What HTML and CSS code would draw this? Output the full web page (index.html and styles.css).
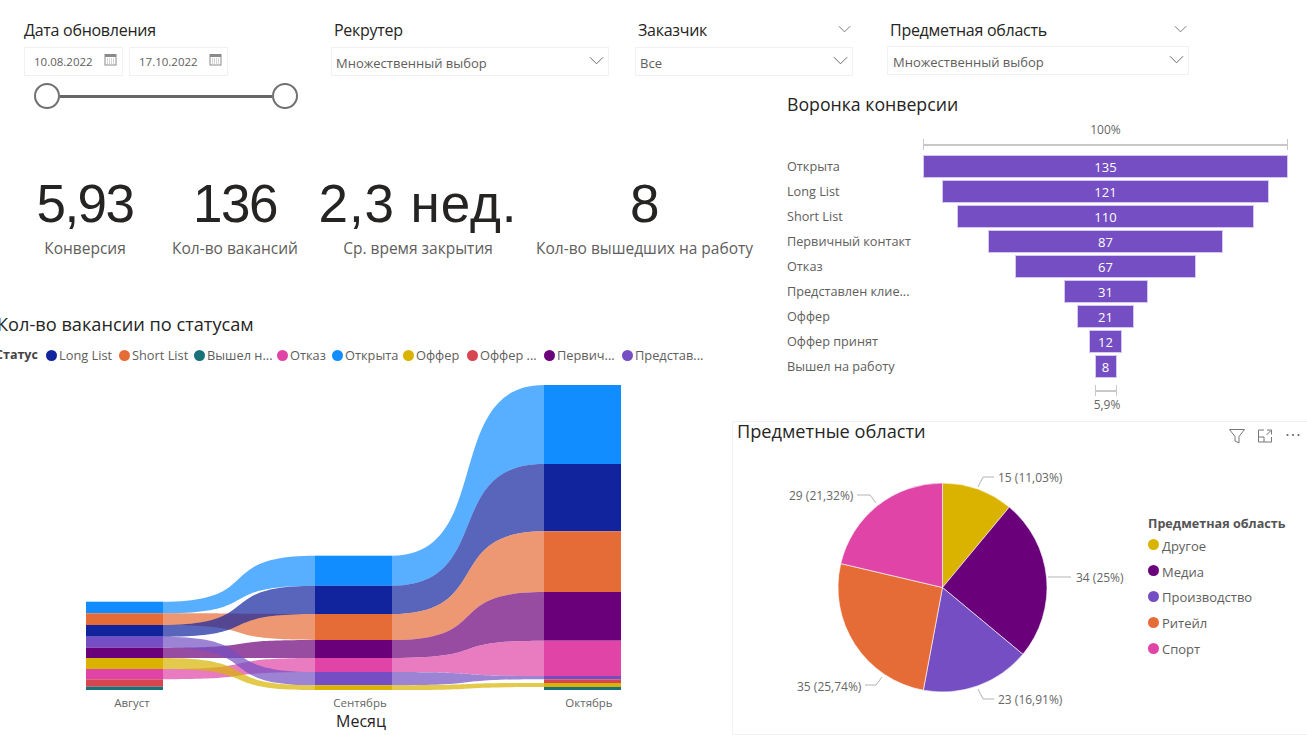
FILE: index.html
```html
<!DOCTYPE html>
<html lang="ru">
<head>
<meta charset="utf-8">
<title>Дашборд вакансий</title>
<link rel="stylesheet" href="styles.css">
</head>
<body>
<div class="page">
  <header class="slicers">
    <section class="slicer s-date">
      <div class="slicer-title"><span>Дата обновления</span></div>
      <div class="dates">
        <div class="date">10.08.2022
          <svg class="cal" viewBox="0 0 13 13"><rect x="1" y="1.5" width="11" height="10.5" fill="none" stroke="#8a8a8a"/><rect x="1" y="1.5" width="11" height="2.5" fill="#8a8a8a"/><path d="M3 6h7M3 8h7M3 10h7" stroke="#a8a8a8" stroke-dasharray="1 1"/></svg>
        </div>
        <div class="date">17.10.2022
          <svg class="cal" viewBox="0 0 13 13"><rect x="1" y="1.5" width="11" height="10.5" fill="none" stroke="#8a8a8a"/><rect x="1" y="1.5" width="11" height="2.5" fill="#8a8a8a"/><path d="M3 6h7M3 8h7M3 10h7" stroke="#a8a8a8" stroke-dasharray="1 1"/></svg>
        </div>
      </div>
      <div class="range"><span class="knob"></span><span class="track"></span><span class="knob"></span></div>
    </section>
    <section class="slicer s-rec">
      <div class="slicer-title"><span>Рекрутер</span></div>
      <div class="drop"><span>Множественный выбор</span><svg class="chev" viewBox="0 0 16 9"><path d="M1 1l7 7 7-7" fill="none" stroke="#605e5c"/></svg></div>
    </section>
    <section class="slicer s-cust">
      <div class="slicer-title"><span>Заказчик</span><svg class="chev" viewBox="0 0 16 9"><path d="M1 1l7 7 7-7" fill="none" stroke="#605e5c"/></svg></div>
      <div class="drop"><span>Все</span><svg class="chev" viewBox="0 0 16 9"><path d="M1 1l7 7 7-7" fill="none" stroke="#605e5c"/></svg></div>
    </section>
    <section class="slicer s-area">
      <div class="slicer-title"><span>Предметная область</span><svg class="chev" viewBox="0 0 16 9"><path d="M1 1l7 7 7-7" fill="none" stroke="#605e5c"/></svg></div>
      <div class="drop"><span>Множественный выбор</span><svg class="chev" viewBox="0 0 16 9"><path d="M1 1l7 7 7-7" fill="none" stroke="#605e5c"/></svg></div>
    </section>
  </header>

  <main class="board">
    <div class="left">
      <div class="kpis">
        <div class="kpi k1"><div class="kpi-num">5,93</div><div class="kpi-label">Конверсия</div></div>
        <div class="kpi k2"><div class="kpi-num">136</div><div class="kpi-label">Кол-во вакансий</div></div>
        <div class="kpi k3"><div class="kpi-num wide">2,3 нед.</div><div class="kpi-label">Ср. время закрытия</div></div>
        <div class="kpi k4"><div class="kpi-num">8</div><div class="kpi-label">Кол-во вышедших на работу</div></div>
      </div>
      <h2 class="title ribbon-title">Кол-во вакансии по статусам</h2>
      <div class="legend-row">
        <b>Статус</b>
        <span class="li i1"><i class="c-navy"></i>Long List</span>
        <span class="li i2"><i class="c-orange"></i>Short List</span>
        <span class="li i3"><i class="c-teal"></i>Вышел н...</span>
        <span class="li i4"><i class="c-pink"></i>Отказ</span>
        <span class="li i5"><i class="c-blue"></i>Открыта</span>
        <span class="li i6"><i class="c-yellow"></i>Оффер</span>
        <span class="li i7"><i class="c-red"></i>Оффер ...</span>
        <span class="li i8"><i class="c-dark"></i>Первич...</span>
        <span class="li i9"><i class="c-purple"></i>Представ...</span>
      </div>
      <svg class="ribbon" viewBox="0 385 732 350">
        <g fill-opacity=".7">
          <path fill="#118DFF" d="M163 601.7C266 601.7 212 555.7 315 555.7V585.7C212 585.7 266 613.3 163 613.3Z"/>
          <path fill="#E66C37" d="M163 613.3C266 613.3 212 614 315 614V640C212 640 266 625 163 625Z"/>
          <path fill="#12239E" d="M163 625C266 625 212 585.7 315 585.7V614C212 614 266 636.7 163 636.7Z"/>
          <path fill="#6B007B" d="M163 647.7C266 647.7 212 640 315 640V658C212 658 266 658 163 658Z"/>
          <path fill="#E044A7" d="M163 669C266 669 212 658 315 658V672C212 672 266 679.3 163 679.3Z"/>
          <path fill="#744EC2" d="M163 636.7C266 636.7 212 672 315 672V685.3C212 685.3 266 647.7 163 647.7Z"/>
          <path fill="#D9B300" d="M163 658C266 658 212 685.3 315 685.3V690C212 690 266 669 163 669Z"/>
          <path fill="#118DFF" d="M392 555.7C495 555.7 441 385 544 385V464C441 464 495 585.7 392 585.7Z"/>
          <path fill="#12239E" d="M392 585.7C495 585.7 441 464 544 464V531.3C441 531.3 495 614 392 614Z"/>
          <path fill="#E66C37" d="M392 614C495 614 441 531.3 544 531.3V592C441 592 495 640 392 640Z"/>
          <path fill="#6B007B" d="M392 640C495 640 441 592 544 592V640.7C441 640.7 495 658 392 658Z"/>
          <path fill="#E044A7" d="M392 658C495 658 441 640.7 544 640.7V676C441 676 495 672 392 672Z"/>
          <path fill="#744EC2" d="M392 672C495 672 441 676 544 676V679.3C441 679.3 495 685.3 392 685.3Z"/>
          <path fill="#D9B300" d="M392 685.3C495 685.3 441 683 544 683V687C441 687 495 690 392 690Z"/>
        </g>
        <g>
          <rect x="86" y="601.7" width="77" height="11.6" fill="#118DFF"/>
          <rect x="86" y="613.3" width="77" height="11.7" fill="#E66C37"/>
          <rect x="86" y="625" width="77" height="11.7" fill="#12239E"/>
          <rect x="86" y="636.7" width="77" height="11" fill="#744EC2"/>
          <rect x="86" y="647.7" width="77" height="10.3" fill="#6B007B"/>
          <rect x="86" y="658" width="77" height="11" fill="#D9B300"/>
          <rect x="86" y="669" width="77" height="10.3" fill="#E044A7"/>
          <rect x="86" y="679.3" width="77" height="7.4" fill="#D64550"/>
          <rect x="86" y="686.7" width="77" height="3.3" fill="#197278"/>

          <rect x="315" y="555.7" width="77" height="30" fill="#118DFF"/>
          <rect x="315" y="585.7" width="77" height="28.3" fill="#12239E"/>
          <rect x="315" y="614" width="77" height="26" fill="#E66C37"/>
          <rect x="315" y="640" width="77" height="18" fill="#6B007B"/>
          <rect x="315" y="658" width="77" height="14" fill="#E044A7"/>
          <rect x="315" y="672" width="77" height="13.3" fill="#744EC2"/>
          <rect x="315" y="685.3" width="77" height="4.7" fill="#D9B300"/>

          <rect x="544" y="385" width="77" height="79" fill="#118DFF"/>
          <rect x="544" y="464" width="77" height="67.3" fill="#12239E"/>
          <rect x="544" y="531.3" width="77" height="60.7" fill="#E66C37"/>
          <rect x="544" y="592" width="77" height="48.7" fill="#6B007B"/>
          <rect x="544" y="640.7" width="77" height="35.3" fill="#E044A7"/>
          <rect x="544" y="676" width="77" height="3.3" fill="#744EC2"/>
          <rect x="544" y="679.3" width="77" height="3.7" fill="#D64550"/>
          <rect x="544" y="683" width="77" height="4" fill="#D9B300"/>
          <rect x="544" y="687" width="77" height="3" fill="#197278"/>
        </g>
        <g class="axis-text" text-anchor="middle">
          <text x="132" y="707">Август</text>
          <text x="360" y="707">Сентябрь</text>
          <text x="589" y="707">Октябрь</text>
        </g>
        <text class="axis-title" x="361" y="727" text-anchor="middle">Месяц</text>
      </svg>
    </div>

    <div class="right">
      <section class="funnel">
        <h2 class="title funnel-title">Воронка конверсии</h2>
        <div class="f-top">100%</div>
        <div class="bracket full"></div>
        <div class="f-row"><span class="f-label">Открыта</span><div class="f-track"><div class="f-bar" style="width:365px">135</div></div></div>
        <div class="f-row"><span class="f-label">Long List</span><div class="f-track"><div class="f-bar" style="width:327px">121</div></div></div>
        <div class="f-row"><span class="f-label">Short List</span><div class="f-track"><div class="f-bar" style="width:297px">110</div></div></div>
        <div class="f-row"><span class="f-label">Первичный контакт</span><div class="f-track"><div class="f-bar" style="width:235px">87</div></div></div>
        <div class="f-row"><span class="f-label">Отказ</span><div class="f-track"><div class="f-bar" style="width:181px">67</div></div></div>
        <div class="f-row"><span class="f-label">Представлен клие...</span><div class="f-track"><div class="f-bar" style="width:84px">31</div></div></div>
        <div class="f-row"><span class="f-label">Оффер</span><div class="f-track"><div class="f-bar" style="width:57px">21</div></div></div>
        <div class="f-row"><span class="f-label">Оффер принят</span><div class="f-track"><div class="f-bar" style="width:33px">12</div></div></div>
        <div class="f-row"><span class="f-label">Вышел на работу</span><div class="f-track"><div class="f-bar" style="width:22px">8</div></div></div>
        <div class="bracket small"></div>
        <div class="f-bottom">5,9%</div>
      </section>

      <section class="pie-card">
        <h2 class="title pie-title">Предметные области</h2>
        <div class="card-icons">
          <svg viewBox="0 0 18 18" class="ic"><path d="M1.5 2.5h15L11 9.5v6.5l-4-2V9.5z" fill="none" stroke="#777"/></svg>
          <svg viewBox="0 0 18 18" class="ic"><path d="M8 3H2.5v12h13V10M10.5 8L15 3.5M11 3h4.5v4.5M2.5 10H8v5" fill="none" stroke="#777"/></svg>
          <svg viewBox="0 0 18 18" class="ic"><circle cx="3.5" cy="8" r="1.1" fill="#666"/><circle cx="9" cy="8" r="1.1" fill="#666"/><circle cx="14.5" cy="8" r="1.1" fill="#666"/></svg>
        </div>
        <div class="pie-body">
          <svg class="pie" viewBox="733 443 416 292">
            <g stroke="#fff" stroke-width=".6">
              <path fill="#D9B300" d="M942.5 587.5V483A104.5 104.5 0 0 1 1009.27 507.11Z"/>
              <path fill="#6B007B" d="M942.5 587.5L1009.27 507.11A104.5 104.5 0 0 1 1022.89 654.27Z"/>
              <path fill="#744EC2" d="M942.5 587.5L1022.89 654.27A104.5 104.5 0 0 1 923.3 690.22Z"/>
              <path fill="#E66C37" d="M942.5 587.5L923.3 690.22A104.5 104.5 0 0 1 840.78 563.55Z"/>
              <path fill="#E044A7" d="M942.5 587.5L840.78 563.55A104.5 104.5 0 0 1 942.5 483Z"/>
            </g>
            <g fill="none" stroke="#b3b3b3">
              <path d="M978 487L983 477H994"/>
              <path d="M1048 577H1071"/>
              <path d="M978 689L983 699H994"/>
              <path d="M882 677L876 685H865"/>
              <path d="M876 503L870 495H857"/>
            </g>
            <g class="pie-text">
              <text x="998" y="482">15 (11,03%)</text>
              <text x="1076" y="582">34 (25%)</text>
              <text x="998" y="704">23 (16,91%)</text>
              <text x="797" y="691">35 (25,74%)</text>
              <text x="789" y="500">29 (21,32%)</text>
            </g>
          </svg>
          <div class="pie-legend">
            <div class="pl-title">Предметная область</div>
            <div class="pl-item"><i class="c-yellow"></i>Другое</div>
            <div class="pl-item"><i class="c-dark"></i>Медиа</div>
            <div class="pl-item"><i class="c-purple"></i>Производство</div>
            <div class="pl-item"><i class="c-orange"></i>Ритейл</div>
            <div class="pl-item"><i class="c-pink"></i>Спорт</div>
          </div>
        </div>
      </section>
    </div>
  </main>
</div>
</body>
</html>
```

FILE: styles.css
```css
* { box-sizing: border-box; }
html, body { margin: 0; padding: 0; background: #fff; }
body { font-family: "Open Sans", "Noto Sans", sans-serif; color: #252423; }
.page { width: 1307px; height: 735px; overflow: hidden; }

/* slicers */
.slicers { display: flex; height: 92px; padding: 20px 0 0 24px; align-items: flex-start; }
.slicer-title { display: flex; justify-content: space-between; align-items: center; height: 20px; padding: 0 2px 0 3px; font-size: 16px; letter-spacing: -.27px; color: #252423; }
.slicer-title .chev { width: 13px; height: 8px; }
.s-date { width: 204px; }
.s-date .slicer-title { padding-left: 0; }
.s-rec { width: 278px; margin-left: 103px; }
.s-cust { width: 218px; margin-left: 26px; }
.s-area { width: 302px; margin-left: 34px; }
.s-area .drop { margin-top: 6px; }
.dates { display: flex; gap: 6px; margin-top: 7px; }
.date { flex: 1; height: 29px; border: 1px solid #f1f1f1; display: flex; align-items: center; justify-content: space-between; padding: 0 5px 1px 9px; font-size: 11.5px; color: #605e5c; white-space: nowrap; }
.cal { width: 13px; height: 13px; margin-top: -4px; }
.range { display: flex; align-items: center; margin: 7px 0 0 10px; width: 264px; height: 26px; }
.knob { width: 26px; height: 26px; border-radius: 50%; border: 2px solid #707070; background: #fff; flex: none; }
.track { flex: 1; height: 3px; background: #666; }
.drop { height: 29px; margin-top: 7px; border: 1px solid #f1f1f1; display: flex; align-items: center; justify-content: space-between; padding: 3px 4px 0 4px; font-size: 13px; color: #605e5c; }
.s-area .drop { padding-left: 5px; }
.chev { width: 15px; height: 9px; flex: none; margin-top: -2px; }
.drop .chev { margin-top: -5px; }

/* board */
.board { display: grid; grid-template-columns: 732px 575px; height: 643px; }
.left { border-bottom: 1px dotted #e6e6e6; }
.kpis { display: flex; padding-top: 84px; }
.kpi { text-align: center; flex: none; }
.k1 { width: 170px; }
.k2 { width: 130px; }
.k3 { width: 236px; }
.k4 { width: 216px; }
.kpi-num { font-family: "Liberation Sans", sans-serif; font-size: 53px; line-height: 56px; height: 56px; color: #252423; white-space: nowrap; letter-spacing: -1.5px; }
.kpi-num.wide { letter-spacing: .9px; }
.kpi-label { margin-top: 6px; font-size: 15.5px; line-height: 20px; height: 20px; color: #605e5c; white-space: nowrap; }
.title { margin: 0; font-weight: 400; font-size: 18.2px; line-height: 24px; color: #252423; white-space: nowrap; }
.ribbon-title { margin: 54px 0 0 -3px; }
.legend-row { height: 18px; margin-top: 10px; font-size: 12.8px; line-height: 18px; color: #605e5c; display: flex; white-space: nowrap; }
.legend-row b { margin-left: -5px; width: 51px; font-weight: 700; font-size: 12.5px; color: #444; flex: none; }
.li { display: flex; align-items: center; flex: none; }
.li i, .pl-item i { display: block; width: 11px; height: 11px; border-radius: 50%; margin-right: 2px; flex: none; }
.i1 { width: 73px; } .i2 { width: 75px; } .i3 { width: 83px; } .i4 { width: 55px; }
.i5 { width: 71px; } .i6 { width: 64px; } .i7 { width: 77px; } .i8 { width: 78px; }
.c-navy { background: #12239E; } .c-orange { background: #E66C37; } .c-teal { background: #197278; }
.c-pink { background: #E044A7; } .c-blue { background: #118DFF; } .c-yellow { background: #D9B300; }
.c-red { background: #D64550; } .c-dark { background: #6B007B; } .c-purple { background: #744EC2; }
.ribbon { display: block; width: 732px; height: 350px; margin-top: 21px; }
.axis-text text { font-size: 11.5px; fill: #666; }
.axis-title { font-size: 16px; fill: #252423; }

/* funnel */
.right { display: flex; flex-direction: column; }
.funnel { height: 329px; padding: 0 0 0 55px; }
.funnel-title { height: 24px; font-size: 17.7px; }
.f-top, .f-bottom { margin-left: 136px; width: 365px; text-align: center; font-size: 12px; line-height: 16px; color: #666; }
.f-top { margin-top: 6px; height: 17px; }
.bracket { height: 11px; border-left: 1px solid #c8c8c8; border-right: 1px solid #c8c8c8; background: linear-gradient(#c8c8c8, #c8c8c8) center / 100% 2px no-repeat; }
.bracket.full { margin-left: 136px; width: 365px; margin-bottom: 5px; }
.bracket.small { margin-left: 308px; width: 22px; margin-top: 5px; }
.f-bottom { margin-top: 1px; padding-left: 3px; }
.f-row { display: flex; height: 25px; align-items: flex-start; }
.f-label { width: 136px; flex: none; font-size: 12.7px; line-height: 22px; color: #605e5c; white-space: nowrap; }
.f-track { width: 365px; display: flex; justify-content: center; }
.f-bar { height: 23px; background: #744EC2; border: 1px solid #d5c8f0; color: #fff; font-size: 13px; line-height: 23px; text-align: center; }

/* pie */
.pie-card { height: 314px; border: 1px solid #f2f2f2; border-right: 0; position: relative; }
.pie-title { margin-left: 4px; height: 21px; line-height: 18px; }
.card-icons { position: absolute; top: 5px; right: 5px; display: flex; gap: 10px; }
.ic { width: 18px; height: 18px; display: block; }
.pie-body { display: flex; }
.pie { display: block; width: 416px; height: 292px; flex: none; }
.pie-text text { font-size: 12px; fill: #666; }
.pie-legend { padding-top: 72px; margin-left: -1px; }
.pl-title { font-size: 12.6px; font-weight: 700; line-height: 18px; color: #555; white-space: nowrap; }
.pl-item { display: flex; align-items: center; height: 25.8px; font-size: 13px; color: #605e5c; }
.pl-item i { margin-right: 3px; margin-top: -2px; }
```
